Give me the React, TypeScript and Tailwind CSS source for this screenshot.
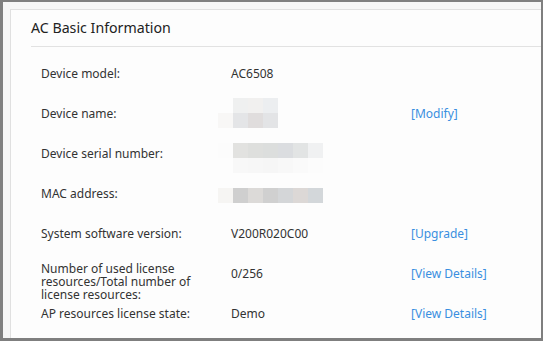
import React from "react"

type Blur = { row: number; cols: string[] }

const nameBlur: Blur[] = [
  { row: 0, cols: ["#fdfdfd", "#eff0f0", "#f1f0ef", "#eceef0"] },
  { row: 1, cols: ["#f8f7f6", "#e4e5e7", "#e0dddd", "#e3e4e6"] },
]

const serialBlur: Blur[] = [
  { row: 0, cols: ["#fcfcfc", "#e2e2e0", "#dedfdd", "#dcdedd", "#dbdde0", "#e2e4e4", "#f0f1f2"] },
  { row: 1, cols: ["#fdfdfd", "#f8f8f8", "#f7f7f7", "#f6f6f6", "#f8f8f8", "#fafafa", "#fcfcfc"] },
]

const macBlur: Blur[] = [
  { row: 0, cols: ["#f6f5f3", "#cfcfcf", "#dcdad8", "#d0d0d0", "#d4d6d8", "#dcd8d6", "#d3d7da"] },
]

function Pixelated({ rows, className = "" }: { rows: Blur[]; className?: string }) {
  return (
    <div className={`flex flex-col -ml-[13px] ${className}`}>
      {rows.map((r) => (
        <div key={r.row} className="flex">
          {r.cols.map((c, i) => (
            <div key={i} className="w-[15px] h-[15px]" style={{ backgroundColor: c }} />
          ))}
        </div>
      ))}
    </div>
  )
}

function Row({
  label,
  value,
  action,
  multiline,
}: {
  label: React.ReactNode
  value?: React.ReactNode
  action?: string
  multiline?: boolean
}) {
  return (
    <div className="flex items-center h-[40px]">
      <div className={`w-[190px] shrink-0 ${multiline ? "pt-[14px] leading-[13px]" : ""}`}>{label}</div>
      <div className="w-[180px] shrink-0">{value}</div>
      {action && <div className="text-[#3a8fe0]">{action}</div>}
    </div>
  )
}

export default function App() {
  return (
    <div
      className="w-[543px] h-[341px] overflow-hidden bg-[#f6f6f6] border-[#7f7f7f] border-t-2 border-l-[3px] border-r-2 border-b-[3px] pt-[7px] pl-[7px]"
      style={{ fontFamily: '"Noto Sans", "Open Sans", sans-serif' }}
    >
      <div className="h-full bg-[#fdfdfd] border-t border-l border-[#e0e0e0] pl-5">
        {/* Header */}
        <div className="h-[37px] flex items-center border-b border-[#e2e2e2] text-[14.2px] text-[#222]">
          AC Basic Information
        </div>

        {/* Info rows */}
        <div className="pl-[10px] pt-[7px] text-[12px] text-[#333]">
          <Row label="Device model:" value="AC6508" />
          <Row label="Device name:" value={<Pixelated rows={nameBlur} className="-mt-[3px]" />} action="[Modify]" />
          <Row label="Device serial number:" value={<Pixelated rows={serialBlur} className="mt-[7px]" />} />
          <Row label="MAC address:" value={<Pixelated rows={macBlur} className="mt-[2px]" />} />
          <Row label="System software version:" value="V200R020C00" action="[Upgrade]" />
          <Row
            label={
              <>
                Number of used license
                <br />
                resources/Total number of
                <br />
                license resources:
              </>
            }
            value="0/256"
            action="[View Details]"
            multiline
          />
          <Row label="AP resources license state:" value="Demo" action="[View Details]" />
        </div>
      </div>
    </div>
  )
}
